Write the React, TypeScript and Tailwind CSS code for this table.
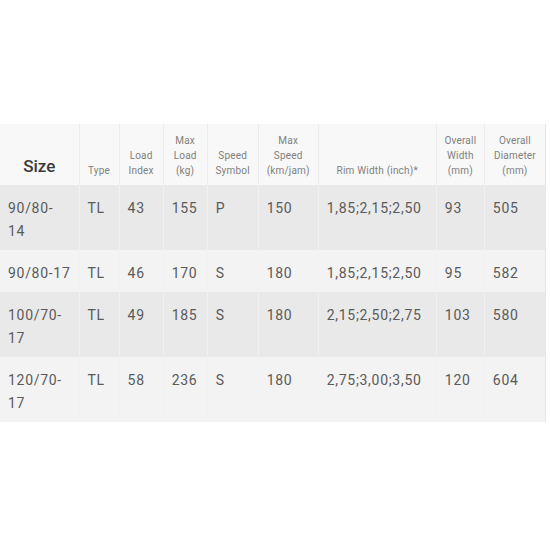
import React from 'react'

const cols = [79, 40, 44, 44, 51, 60, 118, 48, 61]

const headers = [
  ['Type'],
  ['Load', 'Index'],
  ['Max', 'Load', '(kg)'],
  ['Speed', 'Symbol'],
  ['Max', 'Speed', '(km/jam)'],
  ['Rim Width (inch)*'],
  ['Overall', 'Width', '(mm)'],
  ['Overall', 'Diameter', '(mm)'],
]

// size column wraps after the dash in the original, except 90/80-17
const rows = [
  ['90/80-\n14', 'TL', '43', '155', 'P', '150', '1,85;2,15;2,50', '93', '505'],
  ['90/80-17', 'TL', '46', '170', 'S', '180', '1,85;2,15;2,50', '95', '582'],
  ['100/70-\n17', 'TL', '49', '185', 'S', '180', '2,15;2,50;2,75', '103', '580'],
  ['120/70-\n17', 'TL', '58', '236', 'S', '180', '2,75;3,00;3,50', '120', '604'],
]

export default function App() {
  return (
    <div className="w-[550px] h-[550px] bg-white pt-[124px] font-['Roboto',sans-serif]">
      <table className="table-fixed border-collapse w-[546px] border-r border-[#e6e6e6]">
        <colgroup>
          {cols.map((w, i) => (
            <col key={i} style={{ width: w }} />
          ))}
        </colgroup>
        <thead>
          <tr className="bg-[#f8f8f8] h-[61px]">
            <th className="align-bottom pb-[10px] text-[17px] font-medium text-[#3a3a3a] leading-none border-r border-[#ececec]">
              Size
            </th>
            {headers.map((h, i) => (
              <th
                key={i}
                className="align-bottom pb-[7px] text-[10px] font-normal tracking-[0.02em] text-[#808080] leading-[15px] border-r border-[#ececec] last:border-r-0"
              >
                {h.map((l, j) => (
                  <div key={j}>{l}</div>
                ))}
              </th>
            ))}
          </tr>
        </thead>
        <tbody>
          {rows.map((r, i) => (
            <tr key={i} className={i % 2 === 0 ? 'bg-[#e9e9e9]' : 'bg-[#f3f3f3]'}>
              {r.map((c, j) => (
                <td
                  key={j}
                  className="align-top pl-[8px] pr-[2px] pt-[12px] pb-[7px] text-[14px] leading-[23px] tracking-[0.05em] text-[#5a5a5a] border-r border-[#f1f1f1] last:border-r-0 whitespace-pre-line"
                >
                  {c}
                </td>
              ))}
            </tr>
          ))}
        </tbody>
      </table>
    </div>
  )
}
